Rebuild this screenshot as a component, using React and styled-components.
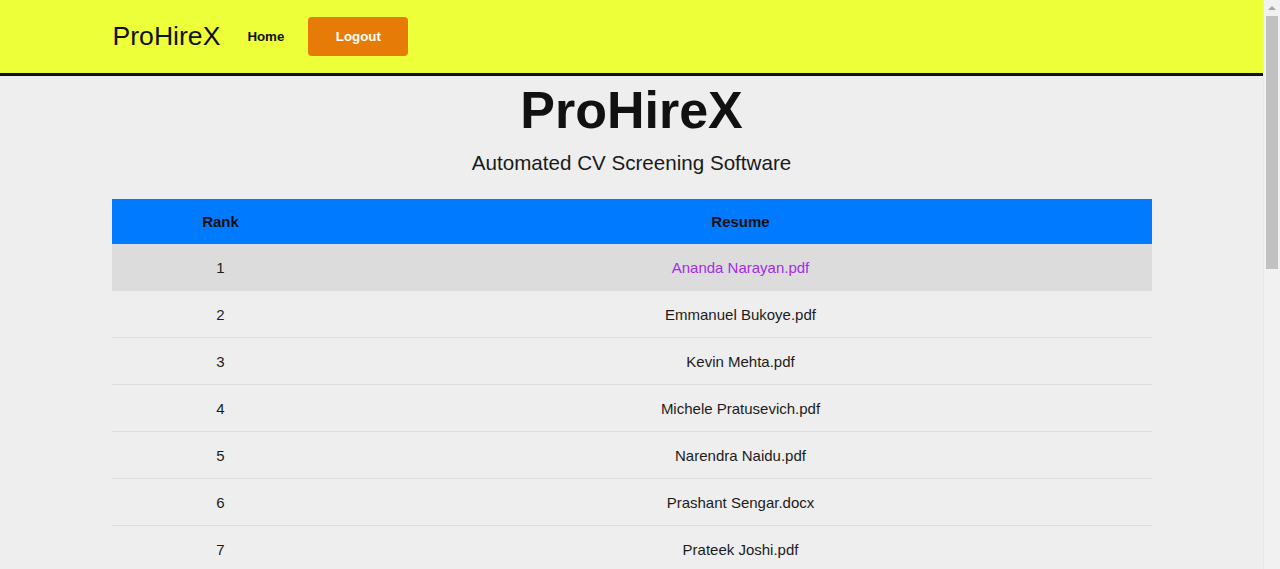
import React from "react";
import styled, { createGlobalStyle } from "styled-components";

const GlobalStyle = createGlobalStyle`
  html, body {
    margin: 0;
    padding: 0;
    background: #eeeeee;
    font-family: "Liberation Sans", Arial, sans-serif;
    color: #111;
  }
`;

const Page = styled.div`
  padding-right: 17px;
`;

// window scrollbar as it shows in the screenshot
const ScrollTrack = styled.div`
  position: fixed;
  top: 0;
  right: 0;
  bottom: 0;
  width: 17px;
  background: #f1f1f1;
  border-left: 1px solid #e8e8e8;
  box-sizing: border-box;
`;

const ScrollArrow = styled.div`
  position: absolute;
  top: 6px;
  left: 4px;
  width: 0;
  height: 0;
  border-left: 4px solid transparent;
  border-right: 4px solid transparent;
  border-bottom: 4px solid #a3a3a3;
`;

const ScrollThumb = styled.div`
  position: absolute;
  top: 16px;
  left: 2px;
  width: 12px;
  height: 253px;
  background: #c1c1c1;
`;

const Navbar = styled.nav`
  height: 73px;
  background: #ecff39;
  border-bottom: 3px solid #111;
`;

const Container = styled.div`
  width: 1040px;
  margin: 0 auto;
`;

const NavInner = styled(Container)`
  height: 100%;
  display: flex;
  align-items: center;
`;

const Brand = styled.span`
  font-size: 26.6px;
  color: #111;
  margin-right: 27px;
  margin-left: 1px;
`;

const NavLink = styled.a`
  font-size: 13.3px;
  font-weight: bold;
  color: #111;
  text-decoration: none;
  margin-right: 24px;
`;

const LogoutButton = styled.button`
  width: 100px;
  height: 39px;
  background: #e67c07;
  color: #fff;
  border: none;
  border-radius: 4px;
  font-family: inherit;
  font-size: 13.3px;
  font-weight: bold;
  margin-bottom: 1px;
`;

const Title = styled.h1`
  margin: 4px 0 0;
  text-align: center;
  font-size: 52px;
  line-height: 60px;
  font-weight: bold;
`;

const Subtitle = styled.p`
  margin: 11px 0 24px;
  text-align: center;
  font-size: 20.6px;
  line-height: 24px;
  color: #1a1a1a;
`;

const Table = styled.table`
  width: 100%;
  border-collapse: collapse;
  margin-bottom: 16px;
`;

const HeadCell = styled.th`
  background: #007bff;
  height: 45px;
  padding: 0;
  font-size: 15px;
  font-weight: bold;
  color: #111;
  text-align: center;
  width: ${(p) => p.width || "auto"};
`;

const Row = styled.tr`
  background: ${(p) => (p.active ? "#dcdcdc" : "transparent")};
  border-bottom: 1px solid ${(p) => (p.active ? "#dcdcdc" : "#dadde2")};
`;

const Cell = styled.td`
  height: 46px;
  padding: 0;
  text-align: center;
  font-size: 15px;
  color: #1c1c1c;
`;

const FileLink = styled.a`
  color: ${(p) => (p.active ? "#a42be6" : "#1c1c1c")};
  text-decoration: none;
`;

const resumes = [
  "Ananda Narayan.pdf",
  "Emmanuel Bukoye.pdf",
  "Kevin Mehta.pdf",
  "Michele Pratusevich.pdf",
  "Narendra Naidu.pdf",
  "Prashant Sengar.docx",
  "Prateek Joshi.pdf",
  "Rahul Sharma.pdf",
  "Ritika Verma.pdf",
  "Sagar Patil.docx",
  "Sandeep Kumar.pdf",
  "Shreya Iyer.pdf",
  "Sneha Kapoor.pdf",
  "Suresh Reddy.pdf",
  "Tanvi Desai.pdf",
  "Uday Kiran.pdf",
  "Varun Malhotra.pdf",
  "Vikram Singh.pdf",
  "Yash Agarwal.pdf",
  "Zoya Khan.pdf",
];

export default function App() {
  return (
    <Page>
      <GlobalStyle />
      <Navbar>
        <NavInner>
          <Brand>ProHireX</Brand>
          <NavLink href="#">Home</NavLink>
          <LogoutButton>Logout</LogoutButton>
        </NavInner>
      </Navbar>
      <Container>
        <Title>ProHireX</Title>
        <Subtitle>Automated CV Screening Software</Subtitle>
        <Table>
          <thead>
            <tr>
              <HeadCell width="218px">Rank</HeadCell>
              <HeadCell>Resume</HeadCell>
            </tr>
          </thead>
          <tbody>
            {resumes.map((name, i) => (
              <Row key={name} active={i === 0}>
                <Cell>{i + 1}</Cell>
                <Cell>
                  <FileLink href="#" active={i === 0}>
                    {name}
                  </FileLink>
                </Cell>
              </Row>
            ))}
          </tbody>
        </Table>
      </Container>
      <ScrollTrack>
        <ScrollArrow />
        <ScrollThumb />
      </ScrollTrack>
    </Page>
  );
}
